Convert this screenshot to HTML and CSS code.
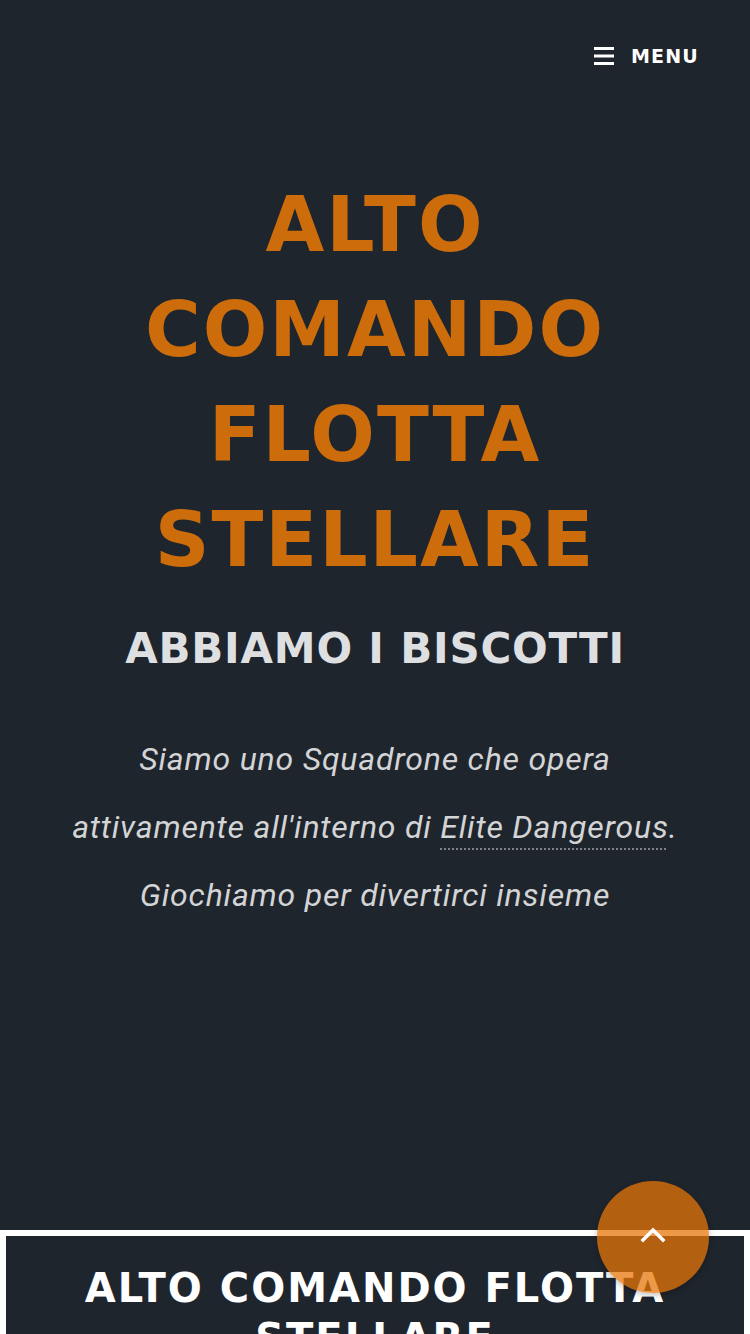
FILE: index.html
```html
<!DOCTYPE html>
<html lang="it">
<head>
<meta charset="utf-8">
<title>Alto Comando Flotta Stellare</title>
<link rel="stylesheet" href="styles.css">
</head>
<body>
<div class="hero">
  <header class="topbar">
    <a class="menu-toggle" href="#">
      <svg class="menu-icon" width="20" height="18" viewBox="0 0 20 18" aria-hidden="true">
        <rect x="0" y="0" width="20" height="3" fill="#fff"/>
        <rect x="0" y="7.5" width="20" height="3" fill="#fff"/>
        <rect x="0" y="15" width="20" height="3" fill="#fff"/>
      </svg>
      <span class="menu-label">MENU</span>
    </a>
  </header>
  <div class="hero-body">
    <h1 class="site-title">ALTO COMANDO FLOTTA STELLARE</h1>
    <p class="tagline">ABBIAMO I BISCOTTI</p>
    <p class="intro">Siamo uno Squadrone che opera attivamente all'interno di <a class="intro-link" href="#">Elite Dangerous</a>. Giochiamo per divertirci insieme</p>
  </div>
</div>
<section class="content">
  <div class="content-box">
    <h2 class="content-title">ALTO COMANDO FLOTTA STELLARE</h2>
  </div>
</section>
<a class="to-top" href="#">
  <svg width="26" height="16" viewBox="0 0 26 16" aria-hidden="true">
    <polyline points="3,13 13,3 23,13" fill="none" stroke="#fff" stroke-width="3.5" stroke-linecap="square"/>
  </svg>
</a>
</body>
</html>
```
FILE: styles.css
```css
html, body {
  margin: 0;
  padding: 0;
}
body {
  background: #1f252d;
  font-family: "DejaVu Sans", sans-serif;
  color: #fff;
  overflow: hidden;
  height: 1334px;
}
.hero {
  min-height: 1230px;
  display: flex;
  flex-direction: column;
}
.topbar {
  display: flex;
  justify-content: flex-end;
  padding: 44px 51px 0 0;
}
.menu-toggle {
  display: flex;
  align-items: center;
  gap: 17px;
  color: #fff;
  text-decoration: none;
}
.menu-icon {
  display: block;
}
.menu-label {
  font-family: "DejaVu Sans", sans-serif;
  font-weight: bold;
  font-size: 19px;
  line-height: 24px;
  letter-spacing: 1.2px;
}
.hero-body {
  text-align: center;
  padding: 104px 40px 0;
}
.site-title {
  margin: 0 auto;
  max-width: 560px;
  font-family: "DejaVu Sans", sans-serif;
  font-weight: bold;
  font-size: 76px;
  line-height: 105px;
  letter-spacing: 2px;
  color: #cd6c0b;
}
.tagline {
  margin: 32px 0 0;
  font-family: "DejaVu Sans", sans-serif;
  font-weight: bold;
  font-size: 42px;
  line-height: 50px;
  letter-spacing: 0.8px;
  color: #dedfe0;
}
.intro {
  margin: 51px auto 0;
  max-width: 610px;
  font-family: Roboto, "Liberation Sans", sans-serif;
  font-style: italic;
  font-size: 32px;
  line-height: 68px;
  letter-spacing: 0.8px;
  color: #d3d4d6;
}
.intro-link {
  color: #d3d4d6;
  text-decoration: underline dotted #7d8189;
  text-decoration-thickness: 2px;
  text-underline-offset: 10px;
}
.content {
  background: #fff;
  padding: 6px 6px 0;
}
.content-box {
  background: #1f252d;
  padding: 27px 20px 40px;
  text-align: center;
}
.content-title {
  margin: 0;
  font-family: "DejaVu Sans", sans-serif;
  font-weight: bold;
  font-size: 40px;
  line-height: 50px;
  letter-spacing: 2px;
  color: #fff;
}
.to-top {
  position: fixed;
  right: 41px;
  bottom: 41px;
  width: 112px;
  height: 112px;
  border-radius: 50%;
  background: rgba(232, 118, 8, 0.74);
  box-shadow: 0 2px 6px rgba(0, 0, 0, 0.25);
  display: flex;
  align-items: center;
  justify-content: center;
}
.to-top svg {
  display: block;
  margin-top: -4px;
}
```
